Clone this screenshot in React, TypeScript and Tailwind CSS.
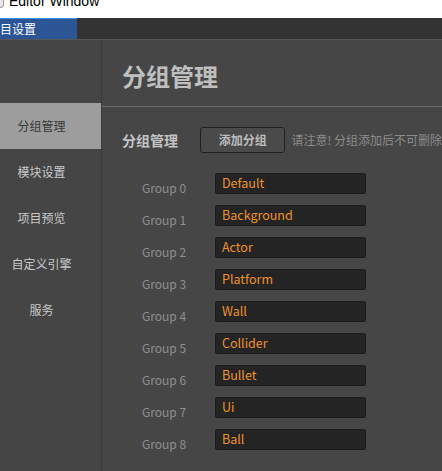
import React from "react";

const groups = ["Default", "Background", "Actor", "Platform", "Wall", "Collider", "Bullet", "Ui", "Ball"];
const nav = ["分组管理", "模块设置", "项目预览", "自定义引擎", "服务"];

export default function App() {
  const font = { fontFamily: '"Noto Sans CJK SC", "Noto Sans", sans-serif' };
  return (
    <div className="w-[442px] h-[471px] overflow-hidden bg-[#464646] flex flex-col" style={font}>
      <div className="h-[18px] bg-white shrink-0 overflow-hidden flex items-start">
        <div className="w-[4px] h-[12px] mt-[-4px] rounded-r-full border border-l-0 border-[#9a9a9a] bg-[#e8e8e8]" />
        <span className="ml-[5px] mt-[-7px] text-[14px] leading-[16px] text-black" style={{ fontFamily: '"Liberation Sans", sans-serif' }}>Editor Window</span>
      </div>
      <div className="h-[22px] shrink-0 bg-[#333333] border-b border-[#565656] flex">
        <div className="w-[77px] h-[21px] bg-[#2b5595] border-t border-[#3d94f0] flex items-center">
          <span className="text-[12px] leading-none text-white">目设置</span>
        </div>
      </div>
      <div className="flex flex-1 min-h-0">
        <div className="w-[102px] shrink-0 bg-[#454545] border-r border-[#3b3b3b] pt-[63px] flex flex-col">
          {nav.map((n, i) => (
            <div
              key={n}
              className={`h-[46px] flex items-center justify-center pr-[18px] text-[12px] ${i === 0 ? "bg-[#9d9d9d] text-[#383838]" : "text-[#c9c9c9]"}`}
            >
              {n}
            </div>
          ))}
        </div>
        <div className="flex-1 min-w-0 flex flex-col">
          <div className="h-[67px] shrink-0 border-b border-[#6a6a6a] pl-[20px] flex items-center pt-[6px]">
            <span className="text-[24px] font-bold text-[#bfbfbf] leading-none">分组管理</span>
          </div>
          <div className="mt-[20px] h-[26px] flex items-center pl-[20px] whitespace-nowrap">
            <span className="w-[79px] text-[14px] font-bold text-[#c4c4c4]">分组管理</span>
            <div className="w-[86px] h-[26px] rounded-[3px] border border-[#202020] bg-[#4a4a4a] flex items-center justify-center text-[12px] font-bold text-[#bdbdbd]">
              添加分组
            </div>
            <span className="ml-[6px] text-[12px] text-[#8c8c8c]">请注意! 分组添加后不可删除</span>
          </div>
          <div className="mt-[20px] flex flex-col gap-[11px] pl-[40px]">
            {groups.map((g, i) => (
              <div key={g} className="flex items-start h-[21px]">
                <span className="w-[73px] mt-[7px] text-[12px] leading-[16px] text-[#8f8f8f]">Group {i}</span>
                <div className="w-[151px] h-[21px] rounded-[2px] border border-[#1b1b1b] bg-[#242424] flex items-center pl-[6px] text-[12.5px] font-normal text-[#f0922c]">
                  {g}
                </div>
              </div>
            ))}
          </div>
        </div>
      </div>
    </div>
  );
}
